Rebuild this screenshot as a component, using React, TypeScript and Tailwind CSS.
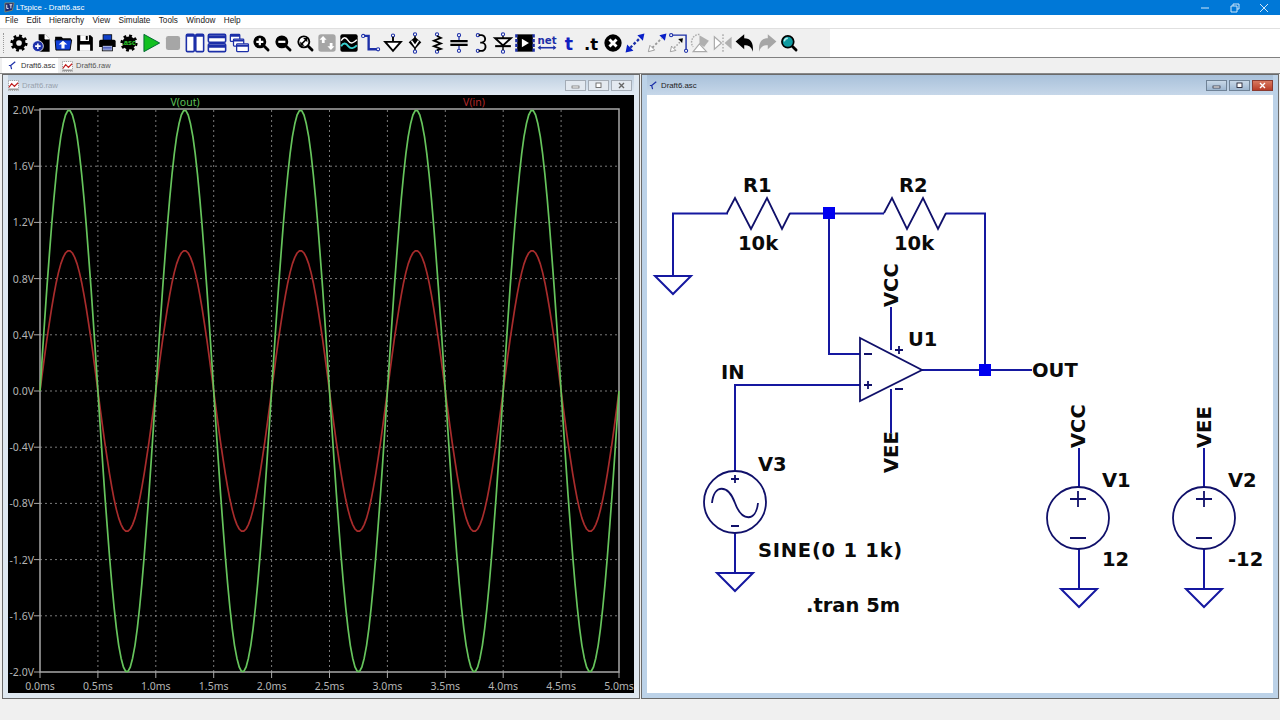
import { ReactNode } from 'react';

const ink = '#000';
const blue = '#1c2fa8';

// toolbar icons, drawn on a 22x22 grid with some air round them
const Ico = ({ children }: { children: ReactNode }) => (
  <svg viewBox="-3 -3 28 28" className="h-[22px] w-[22px] shrink-0 overflow-visible">
    {children}
  </svg>
);

const Magnifier = ({ children, glass = ink }: { children?: ReactNode; glass?: string }) => (
  <>
    <line x1="13.5" y1="13.5" x2="20" y2="20" stroke={ink} strokeWidth="3.6" strokeLinecap="round" />
    <circle cx="9.5" cy="9.5" r="7" fill={glass} stroke={ink} strokeWidth="2.4" />
    {children}
  </>
);

const Pin = ({ cx, cy }: { cx: number; cy: number }) => (
  <circle cx={cx} cy={cy} r="2" fill="#fff" stroke={blue} strokeWidth="1.4" />
);

const GearShape = () => (
  <>
    <circle cx="11" cy="11" r="9.2" fill="none" stroke={ink} strokeWidth="3.4" strokeDasharray="3.6 3.6" />
    <circle cx="11" cy="11" r="8.4" fill={ink} />
  </>
);

const toolbar: ReactNode[] = [
  <>
    <GearShape />
    <circle cx="11" cy="11" r="3.6" fill="#f0f0f0" />
  </>,
  <>
    <path d="M8 0h8l6 6v16H8z" fill={ink} />
    <path d="M16 0v6h6" fill="#fff" stroke="#fff" strokeWidth="1" />
    <circle cx="7" cy="15" r="7" fill={blue} stroke="#fff" strokeWidth="1" />
    <path d="M3.5 15h7M7 11.5v7" stroke="#fff" strokeWidth="2" />
  </>,
  <>
    <path d="M1 3h8l2 2h10v3H1z" fill={ink} />
    <path d="M1 7h21l-2 13H2z" fill="#1040d8" stroke={ink} strokeWidth="1.2" />
    <path d="M11 8l5.5 5H13v5H9v-5H5.5z" fill="#fff" />
  </>,
  <>
    <path d="M1 1h17l3 3v17H1z" fill={ink} />
    <rect x="5" y="1" width="11" height="7.5" fill="#fff" />
    <rect x="12" y="2" width="2.5" height="5" fill={ink} />
    <rect x="4.5" y="13" width="13" height="8" fill="#fff" />
  </>,
  <>
    <rect x="6" y="0.5" width="11" height="8" fill="#1040c8" stroke={ink} />
    <path d="M3 7h17a2 2 0 0 1 2 2v7H1V9a2 2 0 0 1 2-2z" fill={ink} />
    <rect x="5" y="14" width="13" height="7" fill="#b8c4ea" stroke={ink} />
    <path d="M6 16.5h11M6 18.5h11" stroke={blue} />
  </>,
  <>
    <GearShape />
    <text x="11" y="14" textAnchor="middle" className="fill-[#2fd02f] font-['Liberation_Sans',sans-serif] text-[9px] font-bold">
      .asc
    </text>
  </>,
  <path d="M2 0l20 11L2 22z" fill="#12c020" stroke="#063" strokeWidth="1.2" />,
  <rect x="2" y="2" width="18" height="18" rx="3" fill="#a6a6a6" />,
  <>
    <rect x="0" y="0" width="10" height="22" rx="1.5" fill="#fff" stroke={blue} strokeWidth="2" />
    <rect x="12" y="0" width="10" height="22" rx="1.5" fill="#fff" stroke={blue} strokeWidth="2" />
    <path d="M0 1.5h10M12 1.5h10" stroke={blue} strokeWidth="3" />
  </>,
  <>
    <rect x="0" y="0" width="22" height="10" rx="1.5" fill="#fff" stroke={blue} strokeWidth="2" />
    <rect x="0" y="12" width="22" height="10" rx="1.5" fill="#fff" stroke={blue} strokeWidth="2" />
    <path d="M0 3h22M0 15h22" stroke={blue} strokeWidth="4" />
  </>,
  <>
    <rect x="0" y="0" width="12" height="9" rx="1" fill="#fff" stroke={blue} strokeWidth="1.6" />
    <rect x="4" y="6" width="13" height="9" rx="1" fill="#fff" stroke={blue} strokeWidth="1.6" />
    <rect x="8" y="12" width="15" height="10" rx="1" fill="#fff" stroke={blue} strokeWidth="1.6" />
    <path d="M0 2h12M4 8h13M8 14.5h15" stroke={blue} strokeWidth="2.4" />
  </>,
  <Magnifier>
    <path d="M5 9.5h9M9.5 5v9" stroke="#fff" strokeWidth="2.8" />
  </Magnifier>,
  <Magnifier>
    <path d="M5 9.5h9" stroke="#fff" strokeWidth="2.8" />
  </Magnifier>,
  <Magnifier glass="#fff">
    <path d="M6.5 12.5l6-6" stroke={ink} strokeWidth="2" />
    <path d="M5 9v5.5h5.5zM14 10V4.5H8.5z" fill={ink} />
  </Magnifier>,
  <>
    <rect x="0" y="0" width="22" height="22" rx="3.5" fill="#a6a6a6" />
    <path d="M6 2l4.5 5H8v4H4.5V7H1.5z" fill="#fff" />
    <path d="M16 20l4.5-5H18v-4h-3.500v4h-3z" fill="#fff" />
  </>,
  <>
    <rect x="0" y="0" width="22" height="22" rx="2.5" fill={ink} />
    <path d="M1 8c3-5 6-5 9 0s7 3 11-1" fill="none" stroke="#fff" strokeWidth="1.8" />
    <path d="M1 15c3-5 6-4 9 0s7 3 11-1" fill="none" stroke="#39d0d0" strokeWidth="2.4" />
  </>,
  <>
    <path d="M1 2h7v17h12" fill="none" stroke={blue} strokeWidth="3" />
    <Pin cx={1} cy={2} />
    <Pin cx={20} cy={19} />
  </>,
  <>
    <circle cx="11" cy="1.5" r="2" fill="#fff" stroke={blue} strokeWidth="1.4" />
    <path d="M11 3v6" stroke={ink} strokeWidth="2.4" />
    <path d="M1 9.5h20L11 21z" fill="#fff" stroke={ink} strokeWidth="2.4" />
  </>,
  <>
    <Pin cx={11} cy={0} />
    <Pin cx={11} cy={22} />
    <path d="M11 2v3M11 17v3" stroke={ink} strokeWidth="1.8" />
    <path d="M11 3.5l8 6.500-8 9-8-9z" fill={ink} />
    <path d="M6.5 8l4.5 6.500L15.5 8" fill="none" stroke="#fff" strokeWidth="2" />
  </>,
  <>
    <Pin cx={11} cy={0} />
    <Pin cx={11} cy={22} />
    <path d="M11 2l5 2.500-9 3.500 9 3.500-9 3.500 9 3.500-5 1.500" fill="none" stroke={ink} strokeWidth="2.2" />
  </>,
  <>
    <Pin cx={11} cy={1} />
    <Pin cx={11} cy={21} />
    <path d="M11 3v5M11 14v5" stroke={blue} strokeWidth="1.6" />
    <path d="M0 8.5h22M0 13.5h22" stroke={ink} strokeWidth="2.8" />
  </>,
  <>
    <Pin cx={7} cy={1} />
    <Pin cx={7} cy={21} />
    <path d="M8 1h3a4.5 4.5 0 0 1 1 9.5h-2 2a5 5 0 0 1-1 10.500H8" fill="none" stroke={ink} strokeWidth="2.4" />
  </>,
  <>
    <Pin cx={11} cy={0} />
    <Pin cx={11} cy={22} />
    <path d="M11 2v18" stroke={ink} strokeWidth="1.8" />
    <path d="M1 5h20L11 14z" fill="#fff" stroke={ink} strokeWidth="2.4" />
    <path d="M1 15h20" stroke={ink} strokeWidth="2.6" />
  </>,
  <>
    <rect x="1" y="0" width="20" height="22" fill={ink} />
    <path d="M0 0v22M22 0v22" stroke={blue} strokeWidth="3" strokeDasharray="4 2" />
    <path d="M7 5.5l9 5.500-9 5.500z" fill="#fff" />
  </>,
  <>
    <text x="11" y="12" textAnchor="middle" className="fill-[#1c2fa8] font-['DejaVu_Sans',sans-serif] text-[13px] font-bold">
      net
    </text>
    <path d="M1 17h20" stroke={blue} strokeWidth="2" />
    <path d="M-1 17l4-3v6zM23 17l-4-3v6z" fill={blue} />
  </>,
  <text x="11" y="20" textAnchor="middle" className="fill-[#1020c0] font-['DejaVu_Sans',sans-serif] text-[22px] font-bold">
    t
  </text>,
  <text x="11" y="20" textAnchor="middle" className="fill-black font-['DejaVu_Sans',sans-serif] text-[21px] font-bold">
    .t
  </text>,
  <>
    <circle cx="11" cy="11" r="11" fill={ink} />
    <path d="M6.5 6.5l9 9M15.5 6.5l-9 9" stroke="#fff" strokeWidth="3.6" />
  </>,
  <>
    <path d="M5 17L17 5" stroke={blue} strokeWidth="3" strokeDasharray="3.5 2.5" />
    <path d="M-1 23l2-10 8 8zM23 -1l-2 9-7-7z" fill="#0a20c8" />
  </>,
  <>
    <path d="M5 17L17 5" stroke="#999" strokeWidth="2.4" strokeDasharray="3 2.5" />
    <path d="M0 22l2-8 6 6z" fill="#fff" stroke="#888" />
    <path d="M23 -1l-2 9-7-7z" fill="#0a20c8" />
  </>,
  <>
    <path d="M2 1h18v19" fill="none" stroke={blue} strokeWidth="1.8" />
    <Pin cx={1} cy={1} />
    <Pin cx={20} cy={21} />
    <path d="M5 17l7-7" stroke="#999" strokeWidth="1.8" strokeDasharray="2 2" />
    <path d="M0 22l1.5-7 5.500 5.500z" fill="#fff" stroke="#888" />
    <path d="M16 5l-1 6-5-5z" fill={ink} />
  </>,
  <>
    <path d="M9 0a10 10 0 0 0-8 16" fill="none" stroke="#aaa" strokeWidth="1.8" strokeDasharray="2 1.5" />
    <path d="M9 1l12 7-6 8-6-4z" fill="#b0b0b0" />
    <path d="M1 22l8-10 9 10z" fill="#fff" stroke="#aaa" strokeWidth="1.5" />
  </>,
  <>
    <path d="M11 0v22" stroke="#aaa" strokeWidth="1.8" strokeDasharray="2 2" />
    <path d="M0 3l9 8-9 8z" fill="#fff" stroke="#aaa" strokeWidth="1.5" />
    <path d="M22 3l-9 8 9 8z" fill="#b0b0b0" />
  </>,
  <path d="M10 0v5c8 0 12 5 11 17-2-6-5-8-11-8v5L-1 9z" fill={ink} />,
  <path d="M12 0v5C4 5 0 10 1 22c2-6 5-8 11-8v5l11-10z" fill="#a6a6a6" />,
  <>
    <line x1="13.5" y1="13.5" x2="20" y2="20" stroke={ink} strokeWidth="3.6" strokeLinecap="round" />
    <circle cx="9.5" cy="9.5" r="7.5" fill="#0f9aa0" stroke={ink} strokeWidth="2.2" />
    <path d="M5 9a4.500 4.500 0 0 1 4.500-4" fill="none" stroke="#b8ecec" strokeWidth="1.8" />
  </>,
];

const SchematicGlyph = () => (
  <svg viewBox="0 0 12 12" className="h-[11px] w-[11px] shrink-0 text-[#1c2fa8]">
    <path d="M9 2L4 6l1 4M2 6h2" fill="none" stroke="currentColor" strokeWidth="1.3" />
  </svg>
);

const PlotGlyph = () => (
  <svg viewBox="0 0 12 12" className="h-[11px] w-[11px] shrink-0">
    <rect x="0.5" y="0.5" width="11" height="11" fill="#fff" stroke="#888" strokeDasharray="1 1" />
    <path d="M1 8l3-4 3 3 4-4" fill="none" stroke="#c02020" strokeWidth="1.3" />
    <path d="M1 10h10" stroke="#555" />
  </svg>
);

const MdiButton = ({ kind, active }: { kind: 'min' | 'max' | 'close'; active: boolean }) => {
  const skin =
    kind === 'close' && active
      ? 'bg-gradient-to-b from-[#d9785f] to-[#b83c28] border-[#8a3a30] text-white'
      : active
        ? 'bg-gradient-to-b from-[#c8d8e8] to-[#9db6d0] border-[#6f8296] text-[#223]'
        : 'bg-[#e3e9f0] border-[#a4acb6] text-[#666]';
  return (
    <div className={`flex h-[11px] w-[21px] items-center justify-center border ${skin}`}>
      <svg viewBox="0 0 9 7" className="h-[7px] w-[9px]">
        {kind === 'min' && <rect x="1" y="4" width="7" height="2" fill="#fff" stroke="currentColor" strokeWidth="0.7" />}
        {kind === 'max' && <rect x="2" y="1" width="5" height="4.5" fill="#fff" stroke="currentColor" strokeWidth="0.9" />}
        {kind === 'close' && <path d="M2 1l5 5M7 1L2 6" stroke="currentColor" strokeWidth="1.4" />}
      </svg>
    </div>
  );
};

const MdiTitle = ({ active, icon, title }: { active: boolean; icon: ReactNode; title: string }) => (
  <div
    className={`flex h-[20px] shrink-0 items-center text-[7.8px] ${
      active
        ? 'gap-[2px] bg-gradient-to-b from-[#a9c1da] to-[#c6d7e9] pl-[1px] text-[#222]'
        : 'gap-[3px] bg-gradient-to-b from-[#bfd0e1] to-[#e2eaf3] pr-[2px] text-[#98a2ad]'
    }`}
  >
    {icon}
    <span className="flex-1 pt-px">{title}</span>
    <div className="flex gap-[2px] pt-px">
      <MdiButton kind="min" active={active} />
      <MdiButton kind="max" active={active} />
      <MdiButton kind="close" active={active} />
    </div>
  </div>
);

// plot geometry, in page pixels
const plotLeft = 40;
const plotRight = 619;
const plotTop = 110;
const plotBottom = 672;
const xAt = (ms: number) => plotLeft + (ms / 5) * (plotRight - plotLeft);
const yAt = (v: number) => plotBottom - ((v + 2) / 4) * (plotBottom - plotTop);

const wave = (amp: number) => {
  const pts: string[] = [];
  for (let i = 0; i <= 250; i++) {
    const t = i * 0.02;
    pts.push(`${xAt(t).toFixed(1)},${yAt(amp * Math.sin(2 * Math.PI * t)).toFixed(1)}`);
  }
  return pts.join(' ');
};

const voltTicks = [2, 1.6, 1.2, 0.8, 0.4, 0, -0.4, -0.8, -1.2, -1.6, -2];
const timeTicks = [0, 0.5, 1, 1.5, 2, 2.5, 3, 3.5, 4, 4.5, 5];
const plotText = "fill-[#b4b4b4] font-['Noto_Sans',sans-serif] text-[10.5px]";

const Plot = () => (
  <svg viewBox="8 95 626 598" className="h-[598px] w-[626px] shrink-0 bg-black">
    <text x="185" y="106" textAnchor="middle" className="fill-[#5fc05a] font-['Noto_Sans',sans-serif] text-[10.5px]">
      V(out)
    </text>
    <text x="474" y="106" textAnchor="middle" className="fill-[#b02a2a] font-['Noto_Sans',sans-serif] text-[10.5px]">
      V(in)
    </text>
    {voltTicks.map(v => (
      <g key={v}>
        {Math.abs(v) !== 2 && (
          <line x1={plotLeft} x2={plotRight} y1={yAt(v)} y2={yAt(v)} stroke="#7a7a7a" strokeDasharray="2 3" />
        )}
        <line x1={34} x2={plotLeft} y1={yAt(v)} y2={yAt(v)} stroke="#a8a8a8" />
        <text x="34" y={yAt(v) + 4} textAnchor="end" className={plotText}>
          {v.toFixed(1)}V
        </text>
      </g>
    ))}
    {timeTicks.map(t => (
      <g key={t}>
        {t !== 0 && t !== 5 && (
          <line x1={xAt(t)} x2={xAt(t)} y1={plotTop} y2={plotBottom} stroke="#7a7a7a" strokeDasharray="2 3" />
        )}
        <line x1={xAt(t)} x2={xAt(t)} y1={plotBottom} y2={plotBottom + 6} stroke="#a8a8a8" />
        <text x={xAt(t)} y="690" textAnchor="middle" className={plotText}>
          {t.toFixed(1)}ms
        </text>
      </g>
    ))}
    <rect x={plotLeft} y={plotTop - 1} width={plotRight - plotLeft} height={plotBottom - plotTop + 1} fill="none" stroke="#a8a8a8" strokeWidth="1.5" />
    <polyline points={wave(1)} fill="none" stroke="#a82c2c" strokeWidth="1.7" strokeLinejoin="round" />
    <polyline points={wave(2)} fill="none" stroke="#66c45c" strokeWidth="1.7" strokeLinejoin="round" />
  </svg>
);

const wire = '#1518a0';
const part = '#10106a';
const label = "fill-[#0a0a0a] font-['DejaVu_Sans',sans-serif] text-[19.5px] font-bold";

const Ground = ({ x, y }: { x: number; y: number }) => (
  <polygon points={`${x - 18},${y} ${x + 18},${y} ${x},${y + 18}`} fill="none" stroke={wire} strokeWidth="2" />
);

const Junction = ({ x, y }: { x: number; y: number }) => <rect x={x - 6} y={y - 6} width="12" height="12" fill="#0000f0" />;

const Vertical = ({ x, y, children }: { x: number; y: number; children: string }) => (
  <text transform={`rotate(-90 ${x} ${y})`} x={x} y={y} className={label}>
    {children}
  </text>
);

const Source = ({ x, y }: { x: number; y: number }) => (
  <g fill="none" stroke={part} strokeWidth="1.8">
    <circle cx={x} cy={y} r="31" />
    <path d={`M${x - 8} ${y - 19}h16M${x} ${y - 27}v16M${x - 8} ${y + 20}h16`} />
  </g>
);

const Schematic = () => (
  <svg viewBox="647 95 626 598" className="h-[598px] w-[626px] shrink-0 bg-white">
    <g fill="none" stroke={wire} strokeWidth="2">
      <path d="M673 276V213.5H728M790 213.5H884M946 213.5H985V370M829 213.5V354H860M891 307V350M922 370H1032" />
      <path d="M860 385H735V471M891 389V433M735 533V573" />
      <path d="M1079 448V487M1079 549V589M1204 448V487M1204 549V589" />
    </g>
    <Ground x={673} y={276} />
    <Ground x={735} y={573} />
    <Ground x={1079} y={589} />
    <Ground x={1204} y={589} />
    <g fill="none" stroke={part} strokeWidth="1.8">
      <polyline points="727,213 735,198 751,229 767,198 782,229 790,213" />
      <polyline points="884,213 892,198 907,229 923,198 938,229 946,213" />
      <polygon points="860,338 860,401 922,370" />
      <path d="M864 354h8M864 385h8M868 381v8M895 350h8M899 346v8M895 389h8" />
      <circle cx="735" cy="502" r="31" />
      <path d="M731 479h8M735 475v8M731 526h8" />
      <path d="M712 503C714 484 728 484 735 503S756 522 758 503" />
    </g>
    <Source x={1078} y={518} />
    <Source x={1204} y={518} />
    <Junction x={829} y={213} />
    <Junction x={985} y={370} />
    <text x="743" y="192" className={label}>R1</text>
    <text x="738" y="250" className={label}>10k</text>
    <text x="899" y="192" className={label}>R2</text>
    <text x="894" y="250" className={label}>10k</text>
    <text x="908" y="346" className={label}>U1</text>
    <text x="721" y="379" className={label}>IN</text>
    <text x="1032" y="377" className={label}>OUT</text>
    <text x="758" y="471" className={label}>V3</text>
    <text x="758" y="557" className={`${label} tracking-[0.75px]`}>SINE(0 1 1k)</text>
    <text x="806" y="612" className={label}>.tran 5m</text>
    <text x="1102" y="487" className={label}>V1</text>
    <text x="1102" y="566" className={label}>12</text>
    <text x="1228" y="487" className={label}>V2</text>
    <text x="1228" y="566" className={label}>-12</text>
    <Vertical x={898} y={307}>VCC</Vertical>
    <Vertical x={898} y={473}>VEE</Vertical>
    <Vertical x={1085} y={448}>VCC</Vertical>
    <Vertical x={1211} y={448}>VEE</Vertical>
  </svg>
);

export default function App() {
  return (
    <div className="flex h-[720px] w-[1280px] flex-col overflow-hidden bg-[#f0f0f0] font-['Liberation_Sans',sans-serif]">
      {/* Title bar */}
      <div className="flex h-[15px] shrink-0 items-center bg-[#0078d7] text-[7.8px] text-white">
        <svg viewBox="0 0 12 12" className="ml-[4px] h-[11px] w-[11px]">
          <path d="M1 1h10l-2 8-8 2z" fill="#1c2a70" stroke="#d0a040" strokeWidth="0.6" />
          <path d="M3 3v4h2M6 3h3M7.5 3v4" fill="none" stroke="#fff" />
        </svg>
        <span className="ml-[1px] flex-1">LTspice - Draft6.asc</span>
        <div className="flex text-[#cfe6f8]">
          <div className="flex w-[30px] justify-center">
            <svg viewBox="0 0 10 10" className="h-[10px] w-[10px]">
              <path d="M1 5h8" stroke="currentColor" />
            </svg>
          </div>
          <div className="flex w-[30px] justify-center">
            <svg viewBox="0 0 10 10" className="h-[10px] w-[10px]">
              <path d="M3 3V1h6v5H7M1 3h6v6H1z" fill="none" stroke="currentColor" />
            </svg>
          </div>
          <div className="flex w-[30px] justify-center pr-[2px]">
            <svg viewBox="0 0 10 10" className="h-[10px] w-[10px]">
              <path d="M1 1l8 8M9 1l-8 8" stroke="currentColor" />
            </svg>
          </div>
        </div>
      </div>

      {/* Menu */}
      <div className="flex h-[13px] shrink-0 items-center gap-[8.4px] bg-white pl-[5px] text-[8.2px] text-[#222]">
        {['File', 'Edit', 'Hierarchy', 'View', 'Simulate', 'Tools', 'Window', 'Help'].map(m => (
          <span key={m}>{m}</span>
        ))}
      </div>

      {/* Toolbar */}
      <div className="flex h-[30px] shrink-0 border-y border-b-[#808080] border-t-[#e0e0e0]">
        <div className="flex w-[830px] shrink-0 items-center">
          <div className="ml-[3px] mr-[4px] h-[20px] w-px border-l border-dotted border-[#999]" />
          {toolbar.map((icon, i) => (
            <Ico key={i}>{icon}</Ico>
          ))}
        </div>
        <div className="flex-1 bg-white" />
      </div>

      {/* Tabs */}
      <div className="flex h-[16px] shrink-0 items-end gap-[2px] border-b border-[#888] pl-[2px] text-[7.5px] text-[#333]">
        <div className="flex h-[15px] w-[56px] items-center gap-[3px] bg-white pl-[5px]">
          <SchematicGlyph />
          Draft6.asc
        </div>
        <div className="flex h-[14px] w-[50px] items-center gap-[3px] bg-[#e8e8e8] pl-[2px] text-[#555]">
          <PlotGlyph />
          Draft6.raw
        </div>
      </div>

      {/* MDI area */}
      <div className="flex h-[626px] shrink-0 gap-[1px] pl-[2px]">
        <div className="flex h-[625px] w-[638px] shrink-0 flex-col border border-[#6a6a6a] bg-[#dfe8f1] px-[5px] pb-[5px]">
          <MdiTitle active={false} title="Draft6.raw" icon={<PlotGlyph />} />
          <Plot />
        </div>
        <div className="flex h-[625px] w-[638px] shrink-0 flex-col border border-[#6a6a6a] bg-[#bcd2e8] px-[5px] pb-[5px]">
          <MdiTitle active title="Draft6.asc" icon={<SchematicGlyph />} />
          <Schematic />
        </div>
      </div>
      <div className="flex-1 bg-[#f0f0f0]" />
    </div>
  );
}
